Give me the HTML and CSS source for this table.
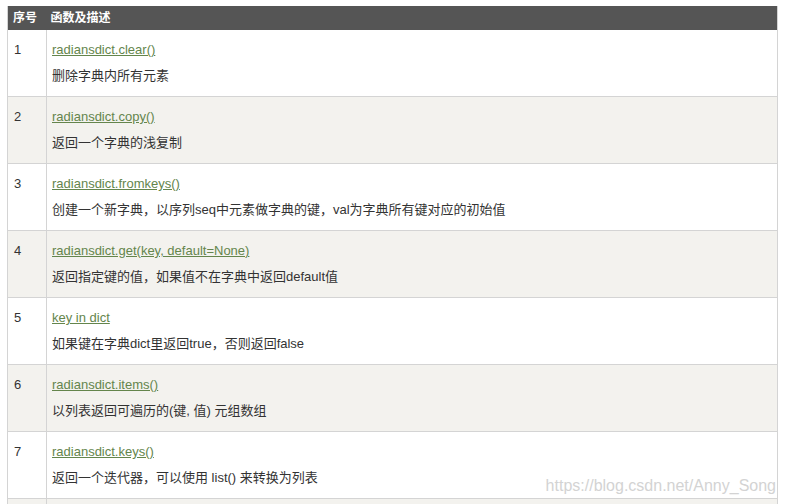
FILE: index.html
```html
<!DOCTYPE html>
<html lang="zh">
<head>
<meta charset="utf-8">
<title>字典内置方法</title>
<link rel="stylesheet" href="styles.css">
</head>
<body>
<div class="wrap">
<table class="ref">
  <thead>
    <tr><th class="col-no">序号</th><th>函数及描述</th></tr>
  </thead>
  <tbody>
    <tr><td class="col-no">1</td><td><p><a href="#">radiansdict.clear()</a></p><p>删除字典内所有元素</p></td></tr>
    <tr><td class="col-no">2</td><td><p><a href="#">radiansdict.copy()</a></p><p>返回一个字典的浅复制</p></td></tr>
    <tr><td class="col-no">3</td><td><p><a href="#">radiansdict.fromkeys()</a></p><p>创建一个新字典，以序列seq中元素做字典的键，val为字典所有键对应的初始值</p></td></tr>
    <tr><td class="col-no">4</td><td><p><a href="#">radiansdict.get(key, default=None)</a></p><p>返回指定键的值，如果值不在字典中返回default值</p></td></tr>
    <tr><td class="col-no">5</td><td><p><a href="#">key in dict</a></p><p>如果键在字典dict里返回true，否则返回false</p></td></tr>
    <tr><td class="col-no">6</td><td><p><a href="#">radiansdict.items()</a></p><p>以列表返回可遍历的(键, 值) 元组数组</p></td></tr>
    <tr><td class="col-no">7</td><td><p><a href="#">radiansdict.keys()</a></p><p>返回一个迭代器，可以使用 list() 来转换为列表</p></td></tr>
    <tr class="tail"><td class="col-no"></td><td></td></tr>
  </tbody>
</table>
<div class="watermark">https://blog.csdn.net/Anny_Song</div>
</div>
</body>
</html>
```
FILE: styles.css
```css
html, body {
  margin: 0;
  padding: 0;
  background: #fff;
  overflow: hidden;
}
body {
  padding: 6px 7px 0 7px;
  font-family: "Liberation Sans", Arial, "Noto Sans CJK SC", sans-serif;
  font-size: 13px;
  color: #333;
}
.wrap {
  position: relative;
  height: 498px;
  overflow: hidden;
}
.ref {
  width: 771px;
  border-collapse: collapse;
  border: 1px solid #d4d4d4;
  border-top: none;
}
.ref th {
  background: #555;
  color: #fff;
  font-size: 12px;
  font-weight: bold;
  text-align: left;
  height: 24px;
  line-height: 24px;
  padding: 0 4px;
  border: none;
}
.ref th.col-no {
  padding-left: 5px;
}
.ref td {
  vertical-align: top;
  border: 1px solid #d4d4d4;
  padding: 9px 5px 9px 5px;
  height: 48px;
}
.ref tbody tr:first-child td {
  border-top: none;
}
.ref td.col-no {
  width: 27px;
  padding-left: 6px;
  line-height: 22px;
}
.ref tbody tr:nth-child(even) td {
  background: #f3f2ee;
}
.ref p {
  margin: 0;
  line-height: 22px;
}
.ref p + p {
  margin-top: 4px;
}
.ref a {
  color: #64854c;
  text-decoration: underline;
}
.watermark {
  position: absolute;
  right: 2px;
  top: 470px;
  font-size: 16px;
  color: #d3d3d3;
  text-shadow: 0 0 1px #fff;
  line-height: 20px;
}
```
